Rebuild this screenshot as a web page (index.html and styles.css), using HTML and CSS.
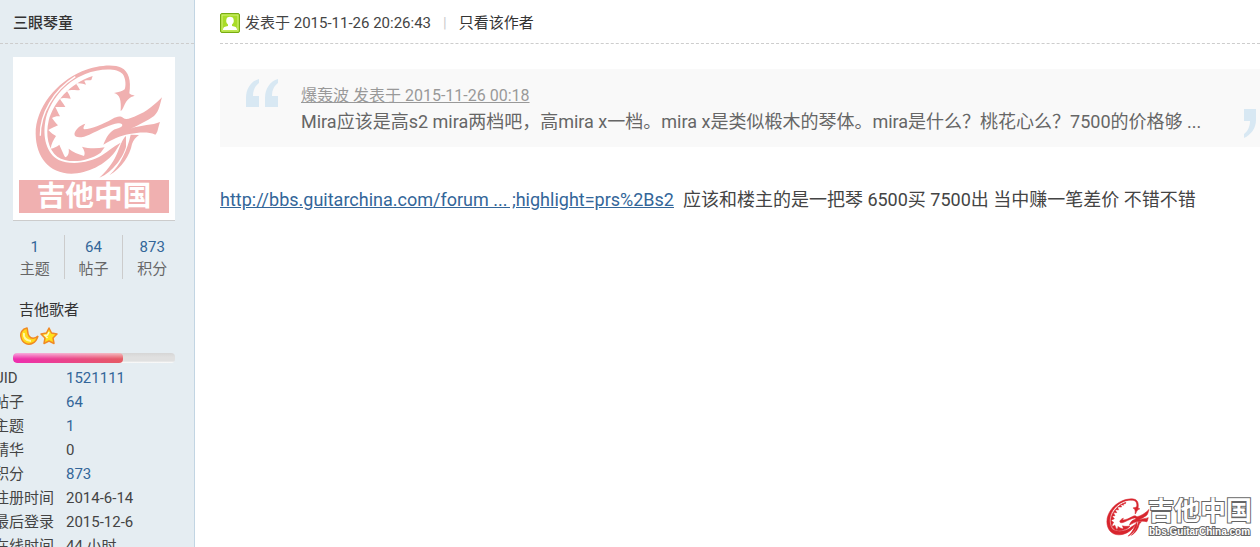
FILE: index.html
```html
<!DOCTYPE html>
<html lang="zh-CN">
<head>
  <meta charset="UTF-8">
  <meta name="viewport" content="width=device-width, initial-scale=1.0">
  <title>吉他中国论坛</title>
  <link rel="stylesheet" href="styles.css">
</head>
<body>
  <div class="post">
    <!-- Author column -->
    <aside class="author">
      <div class="author-name"><a href="#">三眼琴童</a></div>

      <a class="avatar" href="#">
        <svg viewBox="39 171 486 489" role="img" aria-label="吉他中国">
          <g id="dragon">
            <path fill-rule="evenodd" d="M388 280 C394 240 386 214 364 203 C340 191 290 196 246 214 C170 246 106 324 107 402 C108 470 146 520 214 521 C262 521 318 494 346 454 L362 428 C340 440 324 454 306 466 C270 489 212 496 176 480 C138 460 128 410 136 364 C146 306 194 246 256 222 C296 206 350 202 368 222 C378 236 378 258 374 268 C368 274 356 276 342 279 C360 284 364 300 362 334 C376 322 372 296 404 287 C396 285 391 284 388 280 Z"/>
            <path d="M278 228 C210 250 160 308 146 362 C136 404 144 448 172 470 C204 492 262 486 302 458 L314 442 C290 446 266 446 246 440 C254 452 256 460 252 468 C234 462 218 456 206 446 C208 460 204 468 196 472 C190 462 186 452 178 434 C170 440 162 444 152 446 C154 432 160 420 168 408 C160 404 152 398 145 390 C156 384 166 380 174 376 C168 370 162 362 156 354 C164 348 174 348 180 349 C174 338 170 328 166 321 C176 320 186 322 196 321 C190 310 184 304 180 296 C192 292 202 296 212 296 C210 288 206 280 200 272 C214 268 228 272 240 270 C236 262 232 256 228 251 C240 248 250 252 258 254 C256 248 254 246 253 242 C262 240 270 242 274 240 Z"/>
            <path d="M256 371 C238 376 220 394 224 406 C230 416 250 412 268 404 C300 390 332 372 354 370 C372 368 372 382 350 386 C330 390 318 414 310 434 C338 418 358 408 388 402 C416 398 442 394 466 404 C474 398 474 382 480 366 C458 376 424 374 392 386 C418 374 442 362 462 348 C478 334 480 312 486 292 C462 316 438 336 412 346 C394 354 378 362 370 354 C360 346 350 350 338 356 C306 374 278 386 252 388 C248 384 252 378 256 371 Z"/>
            <path d="M378 408 C354 428 362 476 298 533 C340 516 372 466 378 440 Z"/>
            <path d="M392 404 C382 450 362 494 328 526 C366 502 390 466 396 432 C400 420 408 412 417 405 Z"/>
          </g>
          <path d="M121 407 C120 340 162 270 226 230" fill="none" stroke="#fff" stroke-width="4"/>
          <rect x="57" y="540" width="450" height="99"/>
          <text class="avatar-text" x="282" y="618" text-anchor="middle">吉他中国</text>
        </svg>
      </a>

      <ul class="counts">
        <li><a href="#">1</a>主题</li>
        <li><a href="#">64</a>帖子</li>
        <li><a href="#">873</a>积分</li>
      </ul>

      <div class="rank">
        <a href="#">吉他歌者</a>
        <div class="rank-icons">
          <svg class="rank-icon" viewBox="0 0 20 20" aria-hidden="true">
            <path d="M8 2 C3 3 1 7 2 11 C3 17 9 20 14 17 C17 16 18 13 19 10 C16 13 12 13 10 10 C8 7 9 4 8 2 Z" fill="#ffd91c" stroke="#f08a24" stroke-width="1.5"/>
            <path d="M5 7 C4 11 7 15 12 15" fill="none" stroke="#fff9a8" stroke-width="2"/>
          </svg>
          <svg class="rank-icon" viewBox="0 0 20 20" aria-hidden="true">
            <path d="M10 2 L12.500 7 L18 8 L14 12 L15 17.500 L10 15 L5 17.500 L6 12 L2 8 L7.500 7 Z" fill="#ffe21c" stroke="#f08a24" stroke-width="1.500" stroke-linejoin="round"/>
            <path d="M10 6 L8.500 9 L6 9.500 L8.500 12" fill="none" stroke="#fffbc8" stroke-width="1.500"/>
          </svg>
        </div>
      </div>

      <div class="progress"><div class="progress-value" style="width: 68%"></div></div>

      <dl class="profile">
        <dt>UID</dt><dd><a href="#">1521111</a></dd>
        <dt>帖子</dt><dd><a href="#">64</a></dd>
        <dt>主题</dt><dd><a href="#">1</a></dd>
        <dt>精华</dt><dd>0</dd>
        <dt>积分</dt><dd><a href="#">873</a></dd>
        <dt>注册时间</dt><dd>2014-6-14</dd>
        <dt>最后登录</dt><dd>2015-12-6</dd>
        <dt>在线时间</dt><dd>44 小时</dd>
      </dl>
    </aside>

    <!-- Post content -->
    <main class="content">
      <div class="post-info">
        <svg class="user-icon" viewBox="0 0 20 20" aria-hidden="true">
          <rect x="0.500" y="0.500" width="19" height="19" rx="1.500" fill="#9bd119" stroke="#78ad12"/>
          <rect x="2" y="2" width="16" height="16" fill="#a9dc28" stroke="#d3f27c"/>
          <path d="M3 17 C3 14 5 13.500 8 13 V11.500 C6 10 6 8 6.500 6 C7 3 13 3 13.500 6 C14 8 14 10 12 11.500 V13 C15 13.500 17 14 17 17 Z" fill="#fff"/>
        </svg>
        <span>发表于 2015-11-26 20:26:43</span>
        <span class="pipe">|</span>
        <a href="#">只看该作者</a>
      </div>

      <blockquote class="quote">
        <svg class="quote-open" viewBox="0 0 34 30" aria-hidden="true">
          <path d="M14 1 C6 3 1 11 1 20 V29 H14 V18 H8 C8 12 10 8 14 5 Z M33 1 C25 3 20 11 20 20 V29 H33 V18 H27 C27 12 29 8 33 5 Z"/>
        </svg>
        <div class="quote-body">
          <a href="#">爆轰波 发表于 2015-11-26 00:18</a>
          <p>Mira应该是高s2 mira两档吧，高mira x一档。mira x是类似椴木的琴体。mira是什么？桃花心么？7500的价格够 ...</p>
        </div>
        <svg class="quote-close" viewBox="0 0 16 30" aria-hidden="true">
          <path d="M0 1 H12 V12 C12 20 7 27 0 30 V26 C4 23 6 18 6 13 H0 Z"/>
        </svg>
      </blockquote>

      <p class="message"><a href="#">http://bbs.guitarchina.com/forum ... ;highlight=prs%2Bs2</a>&nbsp; 应该和楼主的是一把琴 6500买 7500出 当中赚一笔差价 不错不错</p>
    </main>
  </div>

  <!-- Site logo over the bottom right corner -->
  <svg class="site-logo" viewBox="0 0 150 42" role="img" aria-label="吉他中国 bbs.GuitarChina.com">
    <use class="logo-mark" href="#dragon" transform="translate(-10 -20) scale(0.111)"/>
    <text class="logo-name" x="43" y="23">吉他中国</text>
    <text class="logo-url" x="44" y="38">bbs.GuitarChina.com</text>
  </svg>
</body>
</html>
```
FILE: styles.css
```css
* {
  box-sizing: border-box;
}
body {
  margin: 0;
  background-color: #fff;
  color: #444;
  font-family: Roboto, "Noto Sans CJK SC", sans-serif;
  font-size: 15px;
  line-height: 22px;
}
a {
  color: #369;
  text-decoration: none;
}
p, ul, dl, dd, blockquote {
  margin: 0;
  padding: 0;
}
.post {
  display: flex;
  height: 100vh;
  overflow: hidden;
}

/* Author column */
.author {
  flex: none;
  width: 195px;
  background-color: #e5edf2;
  border-right: 1px solid #c2d5e3;
  overflow: hidden;
}
.author-name, .post-info {
  height: 44px;
  border-bottom: 1px dashed #cdcdcd;
}
.author-name {
  padding: 12px 13px 0;
}
.author-name a, .rank a {
  color: #333;
}
.author-name a {
  font-weight: 500;
}
.avatar {
  display: block;
  margin: 13px 19px 14px 13px;
  background-color: #fff;
  border-bottom: 1px solid #ccc;
}
.avatar svg {
  display: block;
  width: 100%;
  fill: #f0b0b0;
}
.avatar-text {
  fill: #fff;
  font-size: 86px;
  font-weight: 700;
}
.counts {
  display: flex;
  margin: 0 13px 0 6px;
  list-style: none;
  color: #666;
  line-height: 20px;
  text-align: center;
}
.counts li {
  flex: 1;
  border-right: 1px solid #ccc;
}
.counts li:last-child {
  border-right: 0;
}
.counts a {
  display: block;
  line-height: 24px;
}
.rank {
  padding: 20px 19px 0;
}
.rank-icons {
  display: flex;
  padding-top: 5px;
}
.rank-icon {
  width: 20px;
  height: 20px;
}
.progress {
  height: 10px;
  margin: 7px 19px 3px 13px;
  border-radius: 4px;
  background: linear-gradient(#d6d6d6, #e0e0e0 40%, #e0e0e0 80%, #fff);
  overflow: hidden;
}
.progress-value {
  height: 100%;
  border-radius: 4px;
  background: linear-gradient(rgba(255, 255, 255, 0.6), rgba(255, 255, 255, 0) 60%), linear-gradient(90deg, #ee2eb0, #e65c64);
}
.profile {
  display: grid;
  grid-template-columns: 72px 1fr;
  margin-left: -6px;
  line-height: 24px;
  white-space: nowrap;
}

/* Post content */
.content {
  flex: 1;
  min-width: 0;
  padding-left: 25px;
}
.post-info {
  display: flex;
  align-items: center;
  gap: 5px;
  padding-top: 3px;
}
.post-info a {
  color: #333;
}
.user-icon {
  width: 20px;
  height: 20px;
}
.pipe {
  padding: 0 7px;
  color: #ccc;
}
.quote {
  display: flex;
  height: 78px;
  margin: 25px 0 39px;
  padding: 9px 0 9px 25px;
  background-color: #f9f9f9;
  color: #666;
}
.quote-open, .quote-close {
  flex: none;
  height: 30px;
  fill: #d8e8f3;
}
.quote-open {
  width: 34px;
}
.quote-close {
  width: 16px;
  align-self: flex-end;
}
.quote-body {
  flex: 1;
  min-width: 0;
  padding: 6px 0 0 22px;
  font-size: 18px;
  line-height: 27px;
  white-space: nowrap;
}
.quote-body a {
  display: block;
  color: #999;
  font-size: 16px;
  line-height: 24px;
  text-decoration: underline;
}
.message {
  font-size: 18px;
  line-height: 27px;
}
.message a {
  text-decoration: underline;
}

.site-logo {
  position: absolute;
  right: 5px;
  bottom: 8px;
  width: 150px;
  height: 42px;
}
.logo-mark {
  fill: #d8252d;
  stroke: #d8252d;
  stroke-width: 5px;
}
.logo-name, .logo-url {
  fill: #fff;
  stroke: #666;
  stroke-width: 2px;
  paint-order: stroke;
  font-weight: 700;
}
.logo-name {
  font-size: 26px;
}
.logo-url {
  font-family: "Liberation Sans", sans-serif;
  font-size: 10px;
}
```
